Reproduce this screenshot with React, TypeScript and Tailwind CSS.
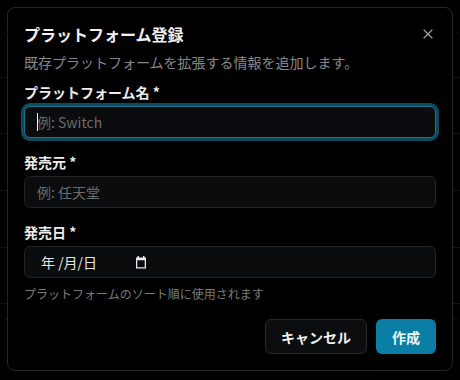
import { X } from "lucide-react";

const font = { fontFamily: '"Noto Sans CJK JP", "Noto Sans", sans-serif' };

function CalendarGlyph() {
  return (
    <svg width="12" height="13" viewBox="0 0 12 13" className="text-gray-200">
      <rect x="2.5" y="0" width="1.5" height="2" fill="currentColor" />
      <rect x="8" y="0" width="1.5" height="2" fill="currentColor" />
      <path d="M1 1.5h10v11H1zM2.3 4.3v6.9h7.4V4.3z" fill="currentColor" fillRule="evenodd" />
    </svg>
  );
}

function Field({ label, children }: { label: string; children: React.ReactNode }) {
  return (
    <div className="flex flex-col gap-1">
      <label className="text-sm font-bold leading-5 text-[#ececec]">{label} *</label>
      {children}
    </div>
  );
}

export default function App() {
  return (
    <div className="relative h-[380px] w-[460px] overflow-hidden bg-black" style={font}>
      {/* faint page behind the modal */}
      <div className="pt-[31px]">
        <div className="h-[46px] rounded-t-lg border-t border-[#121212]" />
        <div className="h-[56px] border-t border-[#121212]" />
        <div className="h-[57px] border-t border-[#121212]" />
        <div className="h-[57px] border-t border-[#121212]" />
        <div className="h-[56px] border-t border-[#121212]" />
        <div className="h-[17px] rounded-b-lg border-y border-[#121212]" />
      </div>

      <div className="absolute inset-0 flex justify-center pt-[7px]">
        <div className="flex h-[364px] w-[446px] flex-col rounded-lg border border-[#262626] bg-black p-4">
          <div className="flex items-center justify-between">
            <h2 className="text-base font-bold leading-5 text-[#f0f0f0]">プラットフォーム登録</h2>
            <X size={16} strokeWidth={1.6} className="text-[#a3a3a3]" />
          </div>
          <p className="mt-2 text-sm leading-5 text-[#878787]">既存プラットフォームを拡張する情報を追加します。</p>

          <div className="mt-2.5 flex flex-col gap-3.5">
            <Field label="プラットフォーム名">
              <div className="relative">
                <input
                  className="h-8 w-full rounded-md border border-[#1d7390] bg-[#0b0c0d] px-3 text-sm text-white outline-none ring-[3px] ring-[#0f4a5e] placeholder:text-[#6b6b6b]"
                  placeholder="例: Switch"
                  readOnly
                />
                <span className="absolute left-[13px] top-[7px] h-[18px] w-px bg-white" />
              </div>
            </Field>
            <Field label="発売元">
              <input
                className="h-8 w-full rounded-md border border-[#232323] bg-[#0b0c0d] px-3 text-sm text-white outline-none placeholder:text-[#6b6b6b]"
                placeholder="例: 任天堂"
                readOnly
              />
            </Field>
            <div className="flex flex-col gap-2">
              <Field label="発売日">
                <div className="flex h-8 w-full items-center rounded-md border border-[#232323] bg-[#0b0c0d] pl-4 text-sm text-[#e6e6e6]">
                  <span className="w-[94px]">年 /月/日</span>
                  <CalendarGlyph />
                </div>
              </Field>
              <p className="text-xs leading-4 text-[#7a7a7a]">プラットフォームのソート順に使用されます</p>
            </div>
          </div>

          <div className="mt-auto flex justify-end gap-[9px]">
            <button className="h-[35px] rounded-md border border-[#2a2a2a] bg-[#0c0d0e] px-[15px] text-sm font-bold text-[#f0f0f0]">
              キャンセル
            </button>
            <button className="h-[35px] rounded-md bg-[#0a7ea5] px-4 text-sm font-bold text-[#eaf6fb]">作成</button>
          </div>
        </div>
      </div>
    </div>
  );
}
